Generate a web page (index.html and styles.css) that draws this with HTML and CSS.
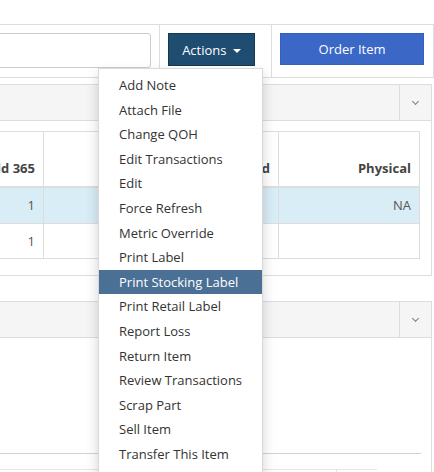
FILE: index.html
```html
<!DOCTYPE html>
<html lang="en">
<head>
<meta charset="UTF-8">
<title>Item Detail</title>
<meta name="viewport" content="width=device-width, initial-scale=1.0">
<link rel="stylesheet" href="styles.css">
</head>
<body>
<div class="page">

  <!-- toolbar: search, actions, order -->
  <div class="toolbar">
    <div class="cell cell-search">
      <input type="text" class="search">
    </div>
    <div class="cell">
      <div class="btn-group">
        <button class="btn btn-actions">Actions <span class="caret"></span></button>
        <ul class="dropdown-menu">
          <li><a href="#">Add Note</a></li>
          <li><a href="#">Attach File</a></li>
          <li><a href="#">Change QOH</a></li>
          <li><a href="#">Edit Transactions</a></li>
          <li><a href="#">Edit</a></li>
          <li><a href="#">Force Refresh</a></li>
          <li><a href="#">Metric Override</a></li>
          <li><a href="#">Print Label</a></li>
          <li class="active"><a href="#">Print Stocking Label</a></li>
          <li><a href="#">Print Retail Label</a></li>
          <li><a href="#">Report Loss</a></li>
          <li><a href="#">Return Item</a></li>
          <li><a href="#">Review Transactions</a></li>
          <li><a href="#">Scrap Part</a></li>
          <li><a href="#">Sell Item</a></li>
          <li><a href="#">Transfer This Item</a></li>
        </ul>
      </div>
    </div>
    <div class="cell">
      <button class="btn btn-order">Order Item</button>
    </div>
  </div>

  <!-- quantities panel -->
  <div class="panel panel-qty">
    <div class="panel-heading">
      <div class="panel-title"></div>
      <div class="panel-toggle"><span class="chev"></span></div>
    </div>
    <div class="panel-body">
      <table class="table">
        <colgroup>
          <col style="width:98px">
          <col style="width:127px">
          <col style="width:108px">
          <col>
        </colgroup>
        <thead>
          <tr>
            <th>Sold 365</th>
            <th></th>
            <th>Reserved</th>
            <th>Physical</th>
          </tr>
        </thead>
        <tbody>
          <tr class="info">
            <td>1</td>
            <td></td>
            <td></td>
            <td>NA</td>
          </tr>
          <tr>
            <td>1</td>
            <td></td>
            <td></td>
            <td></td>
          </tr>
        </tbody>
      </table>
    </div>
  </div>

  <!-- history panel -->
  <div class="panel panel-history">
    <div class="panel-heading">
      <div class="panel-title"></div>
      <div class="panel-toggle"><span class="chev"></span></div>
    </div>
    <div class="panel-body">
      <div class="history-top"></div>
      <table class="history">
        <tr>
          <td class="h-main"></td>
          <td class="h-side"></td>
        </tr>
      </table>
    </div>
  </div>

</div>
</body>
</html>
```

FILE: styles.css
```css
body, html {
  margin: 0;
  overflow: hidden;
  font-family: "Open Sans", "DejaVu Sans", sans-serif;
  font-size: 13px;
  color: #333;
  background: #fff;
}

.page {
  width: 500px;
  margin-left: -66px;
  padding-top: 24px;
}

/* toolbar: search, actions, order */
.toolbar {
  display: grid;
  grid-template-columns: 224px 112px 1fr;
  border: 1px solid #ddd;
  height: 52px;
}
.toolbar .cell {
  border-left: 1px solid #ddd;
  padding: 8px 9px 9px 8px;
}
.toolbar .cell:first-child {
  border-left: 0;
}
.toolbar .cell-search {
  padding-right: 8px;
}
.search {
  box-sizing: border-box;
  width: 100%;
  height: 35px;
  border: 1px solid #ccc;
  border-radius: 3px;
  margin: 0;
  font: inherit;
}
.btn {
  box-sizing: border-box;
  height: 33px;
  font-family: inherit;
  font-size: 13px;
  color: #fff;
  border: 1px solid transparent;
  border-radius: 0;
  padding: 0 12px;
}
.btn-group {
  position: relative;
}
.btn-actions {
  width: 87px;
  background: #1f4d72;
  border-color: #17384f;
}
.caret {
  display: inline-block;
  width: 0;
  height: 0;
  margin-left: 3px;
  vertical-align: middle;
  border-top: 4px solid #fff;
  border-left: 4px solid transparent;
  border-right: 4px solid transparent;
}
.btn-order {
  width: 100%;
  height: 32px;
  background: #3b67c7;
  border-color: #3460bd;
}

/* dropdown */
.dropdown-menu {
  position: absolute;
  z-index: 10;
  top: 35px;
  left: -70px;
  width: 163px;
  margin: 0;
  padding: 4px 0 5px;
  list-style: none;
  background: #fff;
  border: 1px solid rgba(0, 0, 0, .15);
  box-shadow: 0 6px 12px rgba(0, 0, 0, .175);
}
.dropdown-menu a {
  display: block;
  padding: 3px 20px 3px 20px;
  line-height: 18.6px;
  color: #333;
  text-decoration: none;
  white-space: nowrap;
}
.dropdown-menu .active a {
  background: #4b7096;
  color: #fff;
}

/* panels */
.panel {
  border: 1px solid #ddd;
  margin-right: 2px;
  background: #fff;
}
.panel-qty {
  margin-top: 6px;
}
.panel-history {
  margin-top: 25px;
  height: 200px;
}
.panel-heading {
  display: flex;
  height: 35px;
  background: #f5f5f5;
  border-bottom: 1px solid #ddd;
}
.panel-title {
  flex: 1;
}
.panel-toggle {
  width: 31px;
  border-left: 1px solid #ddd;
  display: flex;
  align-items: center;
  justify-content: center;
}
.chev {
  width: 4px;
  height: 4px;
  border-right: 1.5px solid #7a7f8a;
  border-bottom: 1.5px solid #7a7f8a;
  transform: rotate(45deg);
  margin-top: -3px;
}
.panel-qty .panel-body {
  padding: 10px 11px 16px 10px;
}

/* quantities table */
.table {
  width: 100%;
  border-collapse: collapse;
  table-layout: fixed;
  border: 1px solid #ddd;
}
.table th, .table td {
  padding: 8px;
  line-height: 18.6px;
  text-align: right;
  border: 1px solid #ddd;
  color: #555;
}
.table th {
  height: 38px;
  vertical-align: bottom;
  font-weight: 700;
  color: #444;
  border-bottom-width: 2px;
}
.table .info td {
  background: #d9edf7;
}

/* history panel */
.panel-history .panel-body {
  padding: 0 10px 0 0;
}
.history-top {
  height: 115px;
  border-bottom: 1px solid #d2d2d2;
}
.history {
  margin-top: 15px;
  width: 442px;
  border-collapse: collapse;
  border-top: 1px solid #e6e6e6;
}
.history td {
  height: 30px;
  padding: 0;
}
.h-main {
  width: 401px;
  border-right: 1px solid #e6e6e6;
}
```
